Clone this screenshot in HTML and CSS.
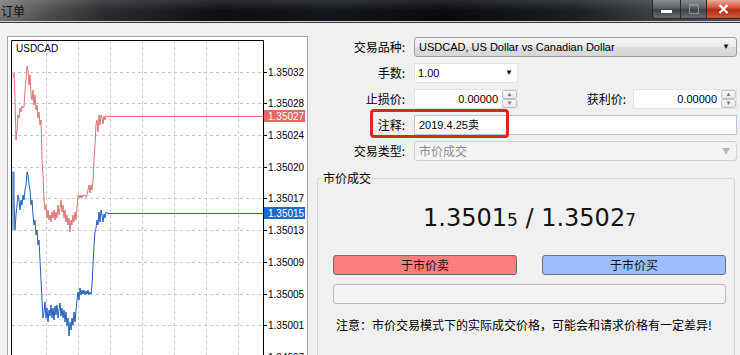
FILE: index.html
```html
<!DOCTYPE html>
<html lang="zh-CN">
<head>
    <meta charset="UTF-8">
    <title>订单</title>
    <link rel="stylesheet" href="styles.css">
</head>
<body>
    <div class="window">
        <div class="titlebar">
            <span class="title">订单</span>
            <div class="caption-btns">
                <span class="cap-btn cap-min"><i></i></span>
                <span class="cap-btn cap-max"><i></i></span>
                <span class="cap-btn cap-close">
                    <svg width="11" height="10" viewBox="0 0 11 10"><path d="M1.5 1 L9.5 9 M9.5 1 L1.5 9" stroke="#fff" stroke-width="2.2"/></svg>
                </span>
            </div>
        </div>

        <div class="client">
            <!-- tick chart -->
            <div class="chart-panel">
                <svg class="chart" width="301" height="320" viewBox="7 36 301 320">
                    <rect x="7" y="36" width="301" height="320" fill="#fff"/>
                    <g stroke="#c8c8c8" stroke-width="1" stroke-dasharray="3 3">
                        <line x1="12" y1="72.5" x2="263" y2="72.5"/>
                        <line x1="12" y1="103.5" x2="263" y2="103.5"/>
                        <line x1="12" y1="135.5" x2="263" y2="135.5"/>
                        <line x1="12" y1="167.5" x2="263" y2="167.5"/>
                        <line x1="12" y1="198.5" x2="263" y2="198.5"/>
                        <line x1="12" y1="230.5" x2="263" y2="230.5"/>
                        <line x1="12" y1="262.5" x2="263" y2="262.5"/>
                        <line x1="12" y1="294.5" x2="263" y2="294.5"/>
                        <line x1="12" y1="325.5" x2="263" y2="325.5"/>
                        <line x1="46.5" y1="41" x2="46.5" y2="356"/>
                        <line x1="78.5" y1="41" x2="78.5" y2="356"/>
                        <line x1="110.5" y1="41" x2="110.5" y2="356"/>
                        <line x1="142.5" y1="41" x2="142.5" y2="356"/>
                        <line x1="174.5" y1="41" x2="174.5" y2="356"/>
                        <line x1="206.5" y1="41" x2="206.5" y2="356"/>
                        <line x1="238.5" y1="41" x2="238.5" y2="356"/>
                    </g>

                    <!-- ask -->
                    <polyline fill="none" stroke="#dc7470" stroke-width="1" points="13,78 14,73 15,100 16,140 17,130 18,115 19,118 20,108 21,112 22,106 23,108 24,107 25,90 26,80 27,66 28,70 29,85 30,75 31,95 32,100 33,90 34,105 35,95 36,110 37,105 38,118 39,112 40,125 41,120 42,158 43,175 44,200 45,210 46,205 47,218 48,210 49,220 50,215 51,222 52,212 53,218 54,210 55,220 56,212 57,218 58,205 59,215 60,208 61,200 62,212 63,205 64,218 65,210 66,222 67,215 68,225 69,218 70,232 71,220 72,225 73,215 74,222 75,212 76,220 77,208 78,195 79,195 80,198 81,195 82,198 83,195 84,196 85,195 86,197 87,195 88,190 89,185 90,193 91,185 92,190 93,180 94,160 95,145 96,125 97,120 98,132 99,115 100,125 101,115 102,118 103,124 104,116 105,120 106,116 108,116.5 263,116.5"/>
                    <!-- bid -->
                    <polyline fill="none" stroke="#1f5fb8" stroke-width="1" points="13,230 13,172 14,172 14,200 15,230 16,215 17,205 18,195 19,200 20,210 21,200 22,205 23,195 24,200 25,190 26,185 27,172 28,175 29,185 30,190 31,205 32,200 33,215 34,225 35,220 36,235 37,230 38,245 39,240 40,260 41,280 42,300 43,318 44,312 45,302 46,318 47,308 48,322 49,310 50,316 51,305 52,318 53,308 54,320 55,306 56,315 57,305 58,318 59,310 60,303 61,316 62,308 63,318 64,310 65,322 66,312 67,326 68,318 69,336 70,322 71,330 72,318 73,325 74,312 75,322 76,310 77,300 78,292 79,300 80,288 81,295 82,290 83,294 84,290 85,295 86,291 87,294 88,290 89,295 90,292 91,294 92,285 93,265 94,245 95,232 96,228 97,220 98,225 99,212 100,222 101,210 102,215 103,222 104,214 105,218 106,212 108,213.5 263,213.5"/>

                    <!-- plot frame -->
                    <path d="M11.5 356 V40.5 H263.5 V356" fill="none" stroke="#000" stroke-width="1"/>
                    <g stroke="#000" stroke-width="1">
                        <line x1="263" y1="72.5" x2="267" y2="72.5"/>
                        <line x1="263" y1="103.5" x2="267" y2="103.5"/>
                        <line x1="263" y1="135.5" x2="267" y2="135.5"/>
                        <line x1="263" y1="167.5" x2="267" y2="167.5"/>
                        <line x1="263" y1="198.5" x2="267" y2="198.5"/>
                        <line x1="263" y1="230.5" x2="267" y2="230.5"/>
                        <line x1="263" y1="262.5" x2="267" y2="262.5"/>
                        <line x1="263" y1="294.5" x2="267" y2="294.5"/>
                        <line x1="263" y1="325.5" x2="267" y2="325.5"/>
                    </g>

                    <text class="sym" x="16" y="52">USDCAD</text>
                    <g class="axis">
                        <text x="268" y="76">1.35032</text>
                        <text x="268" y="107">1.35028</text>
                        <text x="268" y="139">1.35024</text>
                        <text x="268" y="171">1.35020</text>
                        <text x="268" y="202">1.35017</text>
                        <text x="268" y="234">1.35013</text>
                        <text x="268" y="266">1.35009</text>
                        <text x="268" y="298">1.35005</text>
                        <text x="268" y="329">1.35001</text>
                        <text x="268" y="361">1.34997</text>
                    </g>
                    <rect x="264" y="110" width="41" height="12" fill="#e06a66"/>
                    <text class="axis-hl" x="268" y="120">1.35027</text>
                    <rect x="264" y="207" width="41" height="12" fill="#1a6ad2"/>
                    <text class="axis-hl" x="268" y="217">1.35015</text>
                </svg>
            </div>

            <!-- order form -->
            <div class="order-panel">
                <div class="form">
                    <label class="lbl">交易品种:</label>
                    <div class="combo">
                        <span>USDCAD, US Dollar vs Canadian Dollar</span>
                        <span class="arrow">▼</span>
                    </div>

                    <label class="lbl">手数:</label>
                    <div class="field">
                        <div class="edit-combo">
                            <span>1.00</span>
                            <span class="arrow">▼</span>
                        </div>
                    </div>

                    <label class="lbl">止损价:</label>
                    <div class="field">
                        <div class="spin">
                            <span class="spin-val">0.00000</span>
                            <span class="spin-btns"><i>▲</i><i>▼</i></span>
                        </div>
                        <label class="lbl lbl-inline">获利价:</label>
                        <div class="spin">
                            <span class="spin-val">0.00000</span>
                            <span class="spin-btns"><i>▲</i><i>▼</i></span>
                        </div>
                    </div>

                    <label class="lbl">注释:</label>
                    <div class="edit">2019.4.25卖</div>

                    <label class="lbl">交易类型:</label>
                    <div class="combo combo-disabled">
                        <span>市价成交</span>
                        <span class="arrow">▼</span>
                    </div>

                    <div class="mark"></div>
                </div>

                <div class="groupbox">
                    <span class="groupbox-title">市价成交</span>
                    <div class="quote">1.3501<small>5</small> / 1.3502<small>7</small></div>
                    <div class="actions">
                        <button class="btn btn-sell">于市价卖</button>
                        <button class="btn btn-buy">于市价买</button>
                    </div>
                    <div class="status-bar"></div>
                    <p class="notice">注意：市价交易模式下的实际成交价格，可能会和请求价格有一定差异!</p>
                </div>
            </div>
        </div>
    </div>
</body>
</html>
```

FILE: styles.css
```css
:root {
    --face: #f0f0f0;
    --ui-font: "Liberation Sans", "Noto Sans CJK SC", sans-serif;
    --cjk-font: "Noto Sans CJK SC", "Liberation Sans", sans-serif;
}

html, body {
    margin: 0;
    width: 740px;
    height: 355px;
    overflow: hidden;
}

body {
    font-family: var(--ui-font);
    font-size: 11px;
    color: #000;
    background: var(--face);
}

.window {
    display: flex;
    flex-direction: column;
    height: 355px;
}

/* Aero title bar */
.titlebar {
    height: 21px;
    flex: none;
    display: flex;
    align-items: flex-start;
    justify-content: space-between;
    background:
        linear-gradient(to bottom, rgba(255,255,255,0.12), rgba(255,255,255,0) 50%, rgba(0,0,0,0.1)),
        linear-gradient(to right, #7c7c7c 0%, #555 6%, #2b2d30 14%, #0e1014 30%, #15181c 45%, #090b0e 60%, #1d2125 78%, #3c4045 88%, #5c6066 100%);
    border-bottom: 1px solid #cfcfcf;
    box-shadow: 0 1px 0 #3a3a3a;
}

.title {
    font-family: var(--cjk-font);
    font-size: 12px;
    line-height: 21px;
    padding-left: 1px;
    color: #111;
}

.caption-btns {
    display: flex;
    margin-right: -1px;
}

.cap-btn {
    height: 19px;
    display: flex;
    align-items: center;
    justify-content: center;
    border: 1px solid #2a2a2a;
    border-top: none;
    box-sizing: border-box;
    background: linear-gradient(to bottom, #8a8d91, #5b5e62 45%, #3e4145 55%, #6a6d71);
}

.cap-min {
    width: 29px;
    border-bottom-left-radius: 4px;
}

.cap-min i {
    width: 11px;
    height: 3px;
    margin-top: 4px;
    background: #fff;
}

.cap-max {
    width: 26px;
    border-left: none;
}

.cap-max i {
    width: 8px;
    height: 7px;
    border: 1px solid #8c8f93;
    border-top-width: 2px;
}

.cap-close {
    width: 34px;
    border-left: none;
    background: linear-gradient(to bottom, #e9a99a, #d45a40 40%, #b52a12 55%, #cf5a3c);
}

.client {
    flex: 1;
    display: flex;
    gap: 8px;
    padding: 13px 0 0 7px;
    border-top: 1px solid #3c3c3c;
    min-height: 0;
}

/* chart */
.chart-panel {
    width: 301px;
    box-sizing: border-box;
    flex: none;
    border: 1px solid #a5a5a5;
    border-bottom: none;
    background: #fff;
    overflow: hidden;
}

.chart {
    display: block;
    margin: -1px 0 0 -1px;
}

.chart text {
    font-family: "Liberation Sans", sans-serif;
    font-size: 10px;
    fill: #000;
}

.chart .axis-hl {
    fill: #fff;
}

/* form */
.order-panel {
    width: 421px;
    flex: none;
    display: flex;
    flex-direction: column;
}

.form {
    position: relative;
    display: grid;
    grid-template-columns: 89px 1fr;
    grid-auto-rows: 20px;
    column-gap: 9px;
    row-gap: 6px;
    margin-top: 1px;
}

.lbl {
    font-family: var(--cjk-font);
    font-size: 12px;
    line-height: 20px;
    text-align: right;
    white-space: nowrap;
}

.field {
    display: flex;
    align-items: stretch;
}

.combo,
.edit-combo,
.edit,
.spin {
    box-sizing: border-box;
    display: flex;
    align-items: center;
    line-height: 18px;
    white-space: nowrap;
}

.combo {
    justify-content: space-between;
    padding: 0 6px 0 4px;
    border: 1px solid #9e9e9e;
    border-radius: 3px;
    background: linear-gradient(to bottom, #f4f4f4, #e9e9e9 50%, #dcdcdc 51%, #d6d6d6);
}

.arrow {
    font-size: 8px;
    color: #111;
}

.combo-disabled {
    border-color: #cfcfcf;
    background: #f4f4f4;
    color: #8d8d8d;
    font-family: var(--cjk-font);
    font-size: 12px;
}

.combo-disabled .arrow {
    color: #b5b5b5;
}

.edit-combo {
    width: 104px;
    justify-content: space-between;
    padding: 0 4px 0 3px;
    background: #fff;
    border: 1px solid #e3e3e3;
}

.spin {
    width: 104px;
    background: #fff;
    border: 1px solid #e3e3e3;
}

.spin-val {
    flex: 1;
    text-align: right;
    padding-right: 4px;
}

.spin-btns {
    width: 15px;
    height: 18px;
    display: flex;
    flex-direction: column;
}

.spin-btns i {
    flex: 1;
    font-style: normal;
    font-size: 6px;
    line-height: 7px;
    text-align: center;
    color: #6c7a88;
    background: linear-gradient(to bottom, #f8f8f8, #e6e6e6);
    border: 1px solid #c2c2c2;
    border-radius: 2px;
    box-sizing: border-box;
}

.lbl-inline {
    flex: 1;
    padding-right: 7px;
}

.edit {
    padding: 0 4px;
    background: #fff;
    border: 1px solid #b6c9dc;
}

/* red call-out around the comment row */
.mark {
    position: absolute;
    left: 54px;
    top: 72px;
    width: 139px;
    height: 29px;
    box-sizing: border-box;
    border: 3px solid #e2231a;
    border-radius: 4px;
    pointer-events: none;
}

/* market execution group */
.groupbox {
    position: relative;
    flex: 1;
    margin: 17px 2px 0 1px;
    border: 1px solid #d5d5d5;
    border-bottom: none;
    border-radius: 3px 3px 0 0;
    padding: 25px 8px 0 15px;
}

.groupbox-title {
    position: absolute;
    left: 4px;
    top: -8px;
    padding: 0 1px;
    background: var(--face);
    font-family: var(--cjk-font);
    font-size: 12px;
    line-height: 14px;
}

.quote {
    font-family: "DejaVu Sans", sans-serif;
    font-size: 24px;
    line-height: 28px;
    text-align: center;
    color: #141414;
}

.quote small {
    font-size: 17px;
}

.actions {
    display: flex;
    justify-content: space-between;
    margin-top: 21px;
}

.btn {
    width: 184px;
    height: 20px;
    padding: 0;
    font-family: var(--cjk-font);
    font-size: 12px;
    line-height: 18px;
    color: #111;
    border: 1px solid #707070;
    border-radius: 3px;
}

.btn-sell {
    background: #ff7d7d;
}

.btn-buy {
    background: #9dbdf8;
}

.status-bar {
    height: 20px;
    margin-top: 9px;
    box-sizing: border-box;
    border: 1px solid #b9b9b9;
    border-radius: 3px;
    background: #f3f3f3;
}

.notice {
    margin: 13px 0 0 3px;
    font-family: var(--cjk-font);
    font-size: 12px;
    line-height: 16px;
    white-space: nowrap;
}
```
